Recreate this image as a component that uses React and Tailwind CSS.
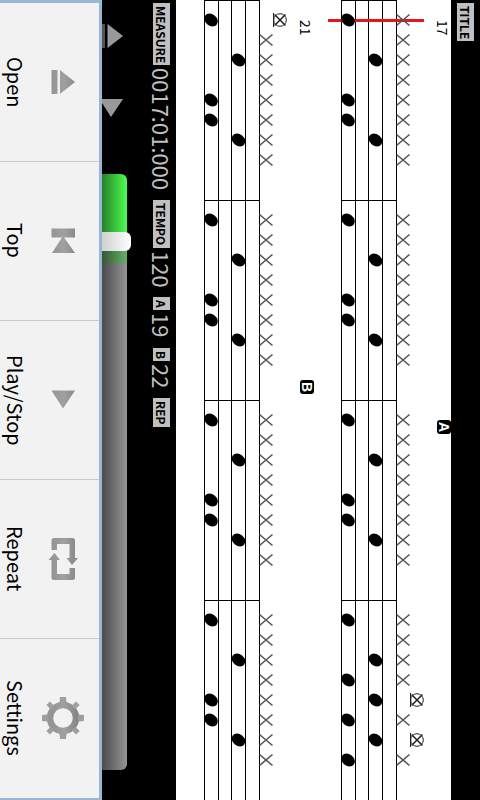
import { useState } from 'react';

const hats = [20, 40, 60, 80, 100, 120, 140, 160];
const groove = { hat: hats, crash: [], snare: [60, 140], bass: [20, 100, 120] };
const fill = { hat: [20, 40, 60, 80, 120, 160], crash: [100, 140], snare: [60, 100, 140], bass: [20, 80, 120, 160] };
const grooveWithCrash = { ...groove, hat: hats.slice(1), crash: [20] };

const systems = [
  { number: 17, mark: 'A', markOffset: 'mt-[384px]', cursor: 20, measures: [groove, groove, groove, fill] },
  { number: 21, mark: 'B', markOffset: 'mt-[344px]', cursor: null, measures: [grooveWithCrash, groove, groove, groove] },
];

const STAFF_LINES = [27.5, 41.5, 54.5, 68.5, 82.5];
const MEASURE = 200;

function NoteHead({ x, y }) {
  return <ellipse cx={x} cy={y} rx="7.4" ry="5.8" transform={`rotate(38 ${x} ${y})`} fill="#000" />;
}

function Hat({ x, y }) {
  return (
    <path
      d={`M${x - 6.5} ${y - 5.5}L${x + 6.5} ${y + 5.5}M${x - 6.5} ${y + 5.5}L${x + 6.5} ${y - 5.5}`}
      stroke="#555"
      strokeWidth="1.6"
    />
  );
}

function Crash({ x, y }) {
  return (
    <g stroke="#222" fill="none">
      <circle cx={x} cy={y} r="6.3" strokeWidth="1" />
      <path d={`M${x - 5.5} ${y - 5.5}l11 11m0 -11l-11 11`} strokeWidth="1.5" />
      <path d={`M${x - 6.5} ${y - 7}v14`} strokeWidth="1" />
    </g>
  );
}

function Staff({ measures, cursor }) {
  return (
    <svg width="120" height="800" viewBox="0 0 120 800" className="shrink-0" aria-hidden="true">
      {STAFF_LINES.map(x => (
        <path key={x} d={`M${x} 0V800`} stroke="#000" />
      ))}
      {cursor !== null && <path d={`M14 ${cursor + 0.5}H110`} stroke="#e8141c" strokeWidth="3" />}
      {measures.map((measure, i) => (
        <g key={i} transform={`translate(0 ${i * MEASURE})`}>
          <path d="M27 .5H83" stroke="#000" />
          {measure.hat.map(y => <Hat key={y} x={89} y={y} />)}
          {measure.crash.map(y => <Crash key={y} x={103} y={y} />)}
          {measure.snare.map(y => <NoteHead key={y} x={61.5} y={y} />)}
          {measure.bass.map(y => <NoteHead key={y} x={34} y={y} />)}
        </g>
      ))}
    </svg>
  );
}

function System({ system }) {
  return (
    <div className="flex flex-row-reverse shrink-0">
      <div className="flex flex-col items-end w-[17px] pt-5">
        <span className="h-4 pr-0.5 text-sm leading-3 text-black [writing-mode:vertical-rl]">{system.number}</span>
        <span className={`flex items-center justify-center w-3.5 h-3.5 rounded-[3px] bg-black text-white text-sm leading-3.5 font-bold font-['Liberation_Sans',sans-serif] [writing-mode:vertical-rl] ${system.markOffset}`}>
          {system.mark}
        </span>
      </div>
      <Staff measures={system.measures} cursor={system.cursor} />
    </div>
  );
}

function Tag({ children }) {
  return (
    <span className="w-[17px] pt-[3px] pb-0.5 bg-[#c0c0c0] text-black text-xs leading-[17px] font-bold [writing-mode:vertical-rl]">
      {children}
    </span>
  );
}

function Readout({ label, value }) {
  return (
    <div className="flex flex-col gap-[3px]">
      <Tag>{label}</Tag>
      {value && (
        <span className="w-[17px] text-[22px] leading-4 text-[#c0c0c0] [writing-mode:vertical-rl]">{value}</span>
      )}
    </div>
  );
}

const icons = {
  Open: (
    <>
      <path d="M-11.5 -12h6v24h-6z" />
      <path d="M-3 -12L12 0L-3 12z" />
    </>
  ),
  Top: (
    <>
      <path d="M-11.5 -12.5h23.5v9h-23.5z" />
      <path d="M0 -5L12 12H-11z" />
    </>
  ),
  'Play/Stop': <path d="M-11.5 -9.5H12L0 8.5z" />,
  Repeat: (
    <>
      <path d="M-11.5 -9V-18.5Q-11.5 -21 -9 -21H9.5Q12 -21 12 -18.5V-1H15L9 6L3.5 -1H6.5V-15H-6V-9z" />
      <path d="M12 9V18.5Q12 21 9.5 21H-9Q-11.5 21 -11.5 18.5V1H-14.5L-8.5 -6L-3 1H-6V15H6.5V9z" />
    </>
  ),
  Settings: (
    <>
      <circle r="13" fill="none" stroke="url(#steel)" strokeWidth="6.5" />
      {[0, 90, 180, 270].map(a => (
        <path key={a} d="M-3.5 -15L-3 -21H3L3.5 -15z" transform={`rotate(${a})`} />
      ))}
      {[45, 135, 225, 315].map(a => (
        <path key={a} d="M-2.5 -15V-21H2.5V-15z" transform={`rotate(${a})`} />
      ))}
    </>
  ),
};

function MenuIcon({ name }) {
  return (
    <svg width="42" height="44" viewBox="-21 -22 42 44" fill="url(#steel)" className="shrink-0" aria-hidden="true">
      <defs>
        <linearGradient id="steel" gradientUnits="userSpaceOnUse" x1="-12" y1="0" x2="14" y2="0">
          <stop offset="0" stopColor="#949494" />
          <stop offset=".5" stopColor="#a0a0a0" />
          <stop offset="1" stopColor="#868686" />
        </linearGradient>
      </defs>
      {icons[name]}
    </svg>
  );
}

function Menu() {
  return (
    <nav className="flex flex-col w-[102px] shrink-0 bg-[#f2f2f2] border-t-3 border-r-3 border-b-2 border-[#98b6d5]">
      {Object.keys(icons).map(name => (
        <button
          key={name}
          type="button"
          className="flex flex-row-reverse flex-1 items-center gap-[15px] pr-[15px] border-b border-[#c8cbcb] last:border-transparent"
        >
          <MenuIcon name={name} />
          <span className="w-6 shrink-0 text-xl leading-6 text-black [writing-mode:vertical-rl]">{name}</span>
        </button>
      ))}
    </nav>
  );
}

function Player() {
  const [position, setPosition] = useState(10);

  return (
    <div className="flex flex-col w-[30px] pt-6 pb-[30px]">
      <button type="button" aria-label="Eject" className="h-6">
        <svg width="22" height="24" viewBox="0 0 22 24" fill="#999">
          <path d="M0 0h3v24H0z" fill="#5a5252" />
          <path d="M5.5 0L21 12L5.5 24z" />
        </svg>
      </button>
      <button type="button" aria-label="Play" className="h-[18px] mt-[51px]">
        <svg width="22" height="18" viewBox="0 0 22 18" fill="#999">
          <path d="M0 0H21L9 18L0 4z" />
        </svg>
      </button>
      <input
        type="range"
        aria-label="Position"
        value={position}
        onChange={e => setPosition(Number(e.target.value))}
        className="flex-1 w-[29px] mt-[57px] appearance-none bg-transparent [writing-mode:vertical-lr] [&::-webkit-slider-runnable-track]:w-[25px] [&::-webkit-slider-runnable-track]:mr-1 [&::-webkit-slider-runnable-track]:h-full [&::-webkit-slider-runnable-track]:rounded-r-md [&::-webkit-slider-runnable-track]:bg-[linear-gradient(to_right,rgba(0,0,0,0.5),rgba(0,0,0,0.3)_40%,transparent),linear-gradient(to_bottom,#4dff50_0_12%,#66b066_12%_15%,#959595_15%)] [&::-webkit-slider-thumb]:appearance-none [&::-webkit-slider-thumb]:w-[29px] [&::-webkit-slider-thumb]:h-[19px] [&::-webkit-slider-thumb]:rounded-r-md [&::-webkit-slider-thumb]:bg-[linear-gradient(to_right,#d0d0d0,#fff)]"
      />
    </div>
  );
}

function App() {
  return (
    <div className="flex flex-row-reverse w-full h-screen overflow-hidden bg-black font-['Noto_Sans_CJK_JP',sans-serif]">
      <header className="w-[29px] shrink-0 pl-1.5 pt-[3px]">
        <Tag>TITLE</Tag>
      </header>
      <main className="flex flex-row-reverse flex-1 bg-white">
        {systems.map(system => (
          <System key={system.number} system={system} />
        ))}
      </main>
      <section className="flex justify-between w-[74px] shrink-0 pr-1.5">
        <Player />
        <div className="flex flex-col gap-2.5 pt-[3px]">
          <Readout label="MEASURE" value="0017:01:000" />
          <Readout label="TEMPO" value="120" />
          <Readout label="A" value="19" />
          <Readout label="B" value="22" />
          <Readout label="REP" />
        </div>
      </section>
      <Menu />
    </div>
  );
}

export default App;
